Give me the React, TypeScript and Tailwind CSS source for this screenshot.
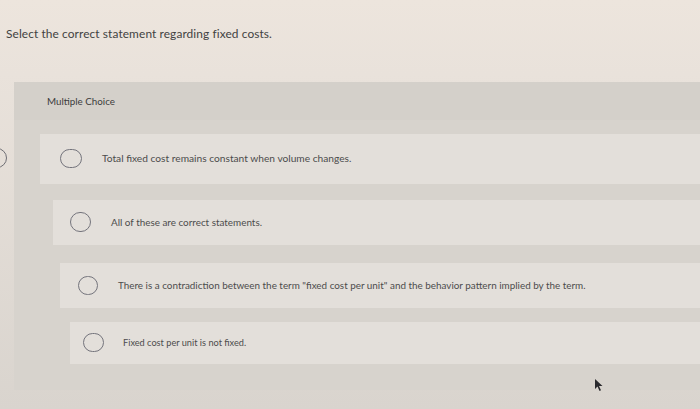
import React from "react";

const options = [
  { text: "Total fixed cost remains constant when volume changes.", ml: "ml-[26px]", h: "h-[50px]", mt: "mt-[14px]", pl: "pl-[20px]", gap: "gap-[20px]", fs: "text-[10.2px]", r: "w-[22px] h-[19px]" },
  { text: "All of these are correct statements.", ml: "ml-[39px]", h: "h-[45px]", mt: "mt-[16px]", pl: "pl-[17px]", gap: "gap-[20px]", fs: "text-[9.9px]", r: "w-[21px] h-[20px]" },
  { text: "There is a contradiction between the term \"fixed cost per unit\" and the behavior pattern implied by the term.", ml: "ml-[46px]", h: "h-[45px]", mt: "mt-[18px]", pl: "pl-[18px]", gap: "gap-[20px]", fs: "text-[9.9px]", r: "w-[20px] h-[19px]" },
  { text: "Fixed cost per unit is not fixed.", ml: "ml-[56px]", h: "h-[42px]", mt: "mt-[14px]", pl: "pl-[13px]", gap: "gap-[19px]", fs: "text-[9.2px]", r: "w-[21px] h-[19px]" },
];

export default function App() {
  return (
    <div
      className="relative w-[700px] h-[409px] overflow-hidden bg-[linear-gradient(180deg,#ede5dd_0%,#e9e2db_18%,#d9d4ce_100%)] text-[#4b4b4b]"
      style={{ fontFamily: "Lato, 'Open Sans', sans-serif" }}
    >
      <div className="pt-[25px] pl-[6px] text-[11.9px] text-[#424242] tracking-[0.1px]">
        Select the correct statement regarding fixed costs.
      </div>

      <div className="mt-[39px] ml-[14px] h-[308px] bg-[#d7d3cd] flex flex-col">
        <div className="h-[38px] flex items-center pl-[33px] text-[9.8px] text-[#3c3c3c] bg-[#d4d0ca]">
          Multiple Choice
        </div>
        {options.map((o, i) => (
          <div
            key={i}
            className={`${o.mt} ${o.ml} ${o.h} ${o.pl} ${o.gap} flex items-center bg-[#e3dfda]`}
          >
            <div className={`${o.r} shrink-0 rounded-full border-[1.5px] border-[#74747c]`} />
            <div className={`${o.fs} text-[#4c4c4c] whitespace-nowrap`}>{o.text}</div>
          </div>
        ))}
      </div>

      <div className="absolute left-[-14px] top-[148px] w-[21px] h-[20px] rounded-full border-[1.5px] border-[#6e6e74]" />

      <svg className="absolute left-[594px] top-[378px]" width="10" height="14" viewBox="0 0 10 14">
        <path d="M1 1 L1 11 L3.5 8.5 L5.5 13 L7 12.3 L5 8 L8.5 8 Z" fill="#2a2a2e" />
      </svg>
    </div>
  );
}
